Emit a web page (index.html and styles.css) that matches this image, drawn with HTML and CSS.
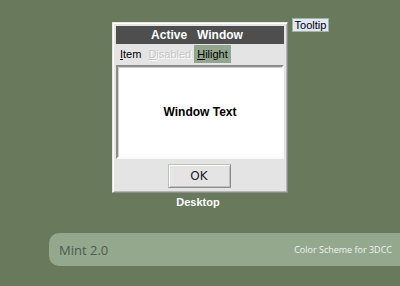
FILE: index.html
```html
<!DOCTYPE html>
<html>
<head>
<meta charset="utf-8">
<link rel="stylesheet" href="styles.css">
</head>
<body>
<div class="desktop">
  <div class="stage">
    <div class="window">
      <div class="titlebar">Active   Window</div>
      <div class="menu">
        <span class="item"><u>I</u>tem</span>
        <span class="item disabled"><u>D</u>isabled</span>
        <span class="item hilight"><u>H</u>ilight</span>
      </div>
      <div class="textarea">Window Text</div>
      <div class="actions"><button class="ok">OK</button></div>
    </div>
    <div class="label">Desktop</div>
  </div>
  <div class="tooltip">Tooltip</div>
  <div class="banner">
    <span class="name">Mint 2.0</span>
    <span class="sub">Color Scheme for 3DCC</span>
  </div>
</div>
</body>
</html>
```
FILE: styles.css
```css
html, body { margin: 0; padding: 0; }
body { background: #687a5b; width: 400px; height: 286px; overflow: hidden; font-family: "Liberation Sans", sans-serif; }
.desktop { position: relative; height: 286px; padding-top: 22px; box-sizing: border-box; display: flex; flex-direction: column; }
.stage { width: 176px; margin-left: 112px; display: flex; flex-direction: column; }
.window {
  box-sizing: border-box; width: 176px; height: 171px;
  background: #e4e4e4;
  border: 1px solid; border-color: #e6e6e6 #8c8c8c #8c8c8c #e6e6e6;
  box-shadow: inset 1px 1px #ffffff, inset -1px -1px #b4b4b4;
  padding: 3px 3px 0 3px;
  display: flex; flex-direction: column;
}
.titlebar {
  height: 18px; background: #4e4e4e; color: #fff; font-weight: bold; font-size: 12px;
  white-space: pre; text-align: center; line-height: 18px; padding-right: 6px;
}
.menu { height: 21px; display: flex; align-items: flex-start; padding-top: 1px; box-sizing: border-box; font-size: 11px; }
.item { height: 18px; line-height: 18px; padding: 0 3px; color: #000; }
.item:first-child { padding-left: 4px; padding-right: 4px; }
.item u { text-decoration: underline; }
.disabled { color: #c6c6c6; text-shadow: 1px 1px #fff; padding-right: 3px; }
.hilight { background: #91a68c; }
.textarea {
  height: 94px; box-sizing: border-box; background: #fff;
  border: 2px solid; border-color: #8c8c8c #fafafa #fafafa #8c8c8c;
  box-shadow: inset 1px 1px #d0d0d0;
  display: flex; align-items: center; justify-content: center;
  font-weight: bold; font-size: 12px; color: #000;
}
.actions { display: flex; justify-content: center; padding-top: 5px; }
.ok {
  width: 63px; height: 24px; box-sizing: border-box; background: #e4e4e4;
  border: 1px solid; border-color: #b8c8b0 #8c8c8c #8c8c8c #b8c8b0;
  box-shadow: inset 1px 1px #fff, inset -1px -1px #c0c0c0;
  font-family: "DejaVu Sans", sans-serif; font-size: 12px; color: #222; padding: 0;
  margin-left: -2px;
}
.label { text-align: center; color: #fff; font-weight: bold; font-size: 11px; margin-top: 3px; margin-left: -4px; }
.tooltip {
  position: absolute; left: 292px; top: 18px; width: 37px; height: 14px; box-sizing: border-box;
  background: #dfe6f6; border: 1px solid #a4b39e; font-size: 11px; line-height: 12px; text-align: center; color: #000;
}
.banner {
  margin-top: 25px; margin-left: 49px; height: 33px; border-radius: 10px 0 0 10px;
  background: #94a88e; display: flex; align-items: center; justify-content: space-between;
  padding: 0 8px 0 10px; font-family: "Open Sans", sans-serif;
}
.name { font-size: 13px; color: #505a50; }
.sub { font-size: 9px; color: #f0f2f0; }
```
